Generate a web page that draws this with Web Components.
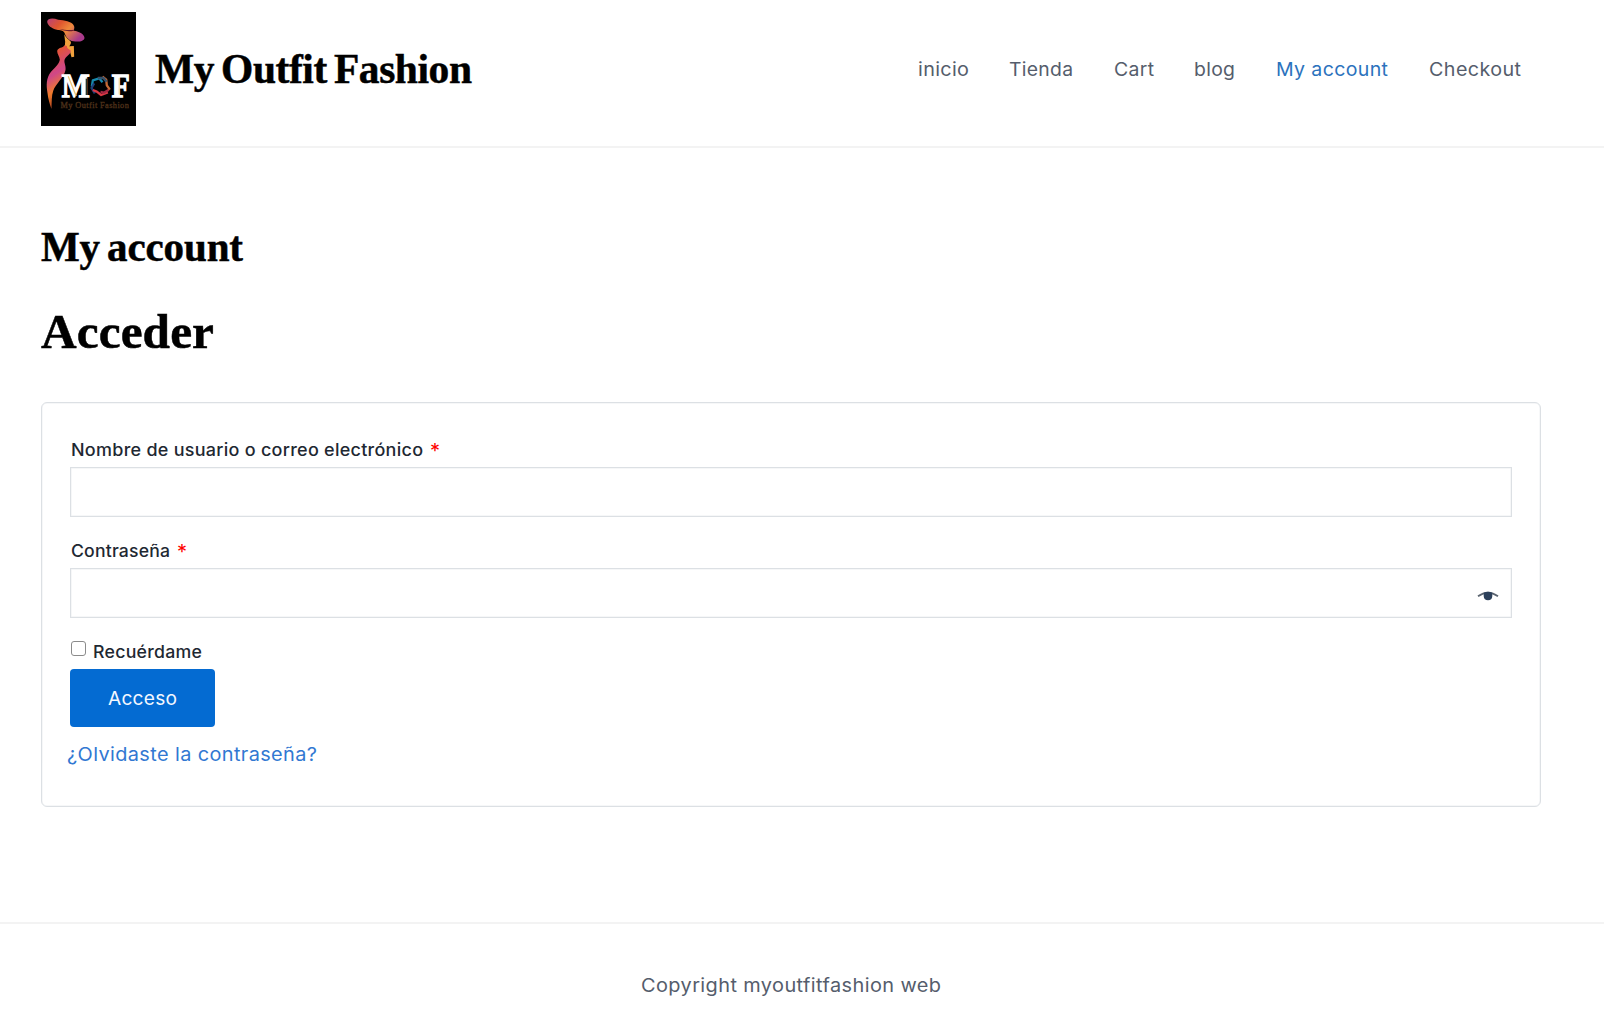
<!DOCTYPE html>
<html lang="es">
<head>
<meta charset="utf-8">
<title>My account – My Outfit Fashion</title>
<style>
html,body{margin:0;background:#fff}
body{width:1604px;height:1012px;overflow:hidden;font-family:Inter,"Open Sans",sans-serif;color:#4b4f58}
</style>
</head>
<body>
<account-page></account-page>
<script>
const define = (name, html, setup) => customElements.define(name, class extends HTMLElement {
  connectedCallback() {
    if (this.shadowRoot) return;
    this.attachShadow({ mode: 'open' }).innerHTML = html;
    if (setup) setup.call(this, this.shadowRoot);
  }
});

/* Text run widened and tracked so that it fills a given measure */
define('tracked-text', `<style>:host{display:block;white-space:nowrap;flex:none}span{display:inline-block;transform-origin:0 50%}</style><span><slot></slot></span>`, function (root) {
  const span = root.querySelector('span');
  const width = +this.getAttribute('width');
  this.style.width = width + 'px';
  const fit = () => {
    span.style.letterSpacing = '0px';
    span.style.transform = 'none';
    const n = this.textContent.length;
    const natural = span.getBoundingClientRect().width;
    const scale = 1 + (width / natural - 1) * .65;
    span.style.letterSpacing = (width / scale - natural) / (n - 1) + 'px';
    span.style.transform = `scaleX(${scale})`;
  };
  fit();
  document.fonts.ready.then(fit);
});

define('brand-logo', `<style>:host{display:block;width:95px;height:114px;flex:none}svg{display:block}</style>
<svg width="95" height="114" viewBox="34.5 37 285 342" aria-label="My Outfit Fashion">
<defs>
<linearGradient id="hat" x1="0" x2="1" y1="0" y2=".6"><stop offset="0" stop-color="#b8407c"/><stop offset=".35" stop-color="#e0562f"/><stop offset=".62" stop-color="#ee8a3c"/><stop offset="1" stop-color="#a93a8c"/></linearGradient>
<linearGradient id="dress" x1="0" x2=".25" y1="0" y2="1"><stop offset="0" stop-color="#f59a35"/><stop offset=".2" stop-color="#e3533d"/><stop offset=".5" stop-color="#cf4788"/><stop offset=".75" stop-color="#f07c2c"/><stop offset="1" stop-color="#a83c1c"/></linearGradient>
</defs>
<rect x="34.500" y="37" width="285" height="342" fill="#000"/>
<path fill="url(#hat)" d="M53 66C54 55 71 55 86 60C104 62 126 65 132 76C137 84 133 88 133 93C150 95 165 104 165 115C163 126 147 127 132 125C117 122 109 112 105 99C101 91 91 92 82 90C66 86 54 77 53 66Z"/>
<path fill="#6b1c2c" d="M89 88C103 90 119 93 135 90L133 93C119 96 105 94 100 91Z"/>
<path fill="#f0a13d" d="M104 104C110 115 119 121 124 126C126 131 121 137 119 140L133 139L134 171L126 173L121 154L105 151L107 126Z"/>
<path fill="url(#dress)" d="M105 137C100 146 86 143 83 154C83 164 90 170 91 180C89 193 75 204 64 217C50 235 50 256 54 280C56 298 61 315 66 328C67 306 66 288 71 274C78 252 104 234 108 211C110 198 103 190 105 181C108 170 123 165 124 154C122 148 113 150 112 139Z"/>
<g font-family="'Liberation Serif',serif" font-weight="bold" fill="#fff" stroke="#fff" stroke-width="4">
<text x="97" y="291" font-size="99" textLength="84" lengthAdjust="spacingAndGlyphs">M</text>
<text x="247" y="291" font-size="99" textLength="54" lengthAdjust="spacingAndGlyphs">F</text>
</g>
<path d="M116 230L140 289" stroke="#eec779" stroke-width="4"/>
<path d="M171 237V286" stroke="#26352b" stroke-width="5"/>
<path d="M269 235V284" stroke="#efd29a" stroke-width="3"/>
<g fill="none" stroke-width="7" stroke-linejoin="round">
<path stroke="#168aae" d="M187 260L190 242L209 236L219 248"/>
<path stroke="#1e3e78" d="M194 251L186 265L196 281"/>
<path stroke="#d93945" d="M190 271L202 276L215 286L235 278"/>
<path stroke="#a32642" d="M238 270L223 279L213 277"/>
<path stroke="#c66934" d="M219 231L230 240L232 257L241 270"/>
<path stroke="#37526b" d="M205 235L222 235L231 246"/>
</g>
<text x="93" y="326" font-family="'Liberation Serif',serif" font-size="25" fill="#4d3019" stroke="#4d3019" stroke-width="1" textLength="205">My Outfit Fashion</text>
</svg>`);

define('site-nav', `<style>:host{display:flex;font-size:18.500px;line-height:28px;color:#555d6c}
nav{display:flex;gap:40.600px}.on{color:#2b72bd}</style>
<nav><tracked-text width="51">inicio</tracked-text><tracked-text width="64">Tienda</tracked-text><tracked-text width="40">Cart</tracked-text><tracked-text width="41">blog</tracked-text><tracked-text class="on" width="112">My account</tracked-text><tracked-text width="92">Checkout</tracked-text></nav>`);

define('site-header', `<style>:host{display:flex;align-items:center;box-sizing:border-box;height:148px;padding:0 83.500px 8px 41px;border-bottom:2px solid #f3f3f3}
.title{margin-left:19px;font:bold 43px/60px "Liberation Serif",serif;color:#000;word-spacing:-3px;-webkit-text-stroke:.5px #000}site-nav{margin-left:auto}</style>
<brand-logo></brand-logo><tracked-text class="title" width="317">My Outfit Fashion</tracked-text><site-nav></site-nav>`);

define('form-field', `<style>:host{display:block}
.label{display:flex;gap:7px;box-sizing:border-box;height:28px;font-size:17px;line-height:28px;font-weight:500;color:#1e2832;padding:1px 0 0 1px;margin-bottom:4px}
.req{color:#f00;font-size:20px;line-height:30px;font-weight:400}
.box{box-sizing:border-box;height:50px;border:1px solid #dce0e4;box-shadow:inset 0 0 0 .5px #eef0f2;display:flex;align-items:center;justify-content:flex-end;padding:6px 12px 0 0}
svg{display:block}</style>
<div class="label"></div><div class="box"></div>`, function (root) {
  root.querySelector('.label').innerHTML = `<tracked-text width="${this.getAttribute('measure')}">${this.getAttribute('label')}</tracked-text><span class="req">*</span>`;
  if (this.hasAttribute('secret')) root.querySelector('.box').innerHTML = `<svg width="22" height="12" viewBox="0 0 22 12"><path d="M1 6.300Q11-1.200 21 6.300" fill="none" stroke="#5b6470" stroke-width="1.700"/><path d="M6.700 2.700Q11 .8 15.300 2.700V6Q15 10.300 11 10.300T6.700 6Z" fill="#2c405b"/></svg>`;
});

define('remember-me', `<style>:host{display:flex;align-items:flex-start;height:28px;padding-left:1px;font-size:17px;line-height:30px;font-weight:500;color:#1e2832}
i{box-sizing:border-box;width:15px;height:15px;margin:4px 7px 0 0;border:1.500px solid #8b8b8b;border-radius:3px}</style>
<i></i><tracked-text width="109">Recuérdame</tracked-text>`);

define('submit-button', `<style>:host{display:flex;align-items:center;justify-content:center;width:145px;height:58px;border-radius:4px;background:#046bd2;color:#f4f8ff;font-size:18.500px;line-height:28px}</style>
<tracked-text width="69">Acceso</tracked-text>`);

define('login-form', `<style>:host{display:block;box-sizing:border-box;width:1500px;height:405px;border:1px solid #dce0e4;box-shadow:inset 0 0 0 .5px #eef0f2;border-radius:6px;padding:32px 28.500px 0 28px}
form-field{margin-bottom:19px}submit-button{margin-top:4px}
.lost{font-size:18.500px;line-height:28px;color:#3178d2;margin:13px 0 0 -3px}</style>
<form-field label="Nombre de usuario o correo electrónico" measure="352"></form-field>
<form-field label="Contraseña" measure="99" secret></form-field>
<remember-me></remember-me><submit-button></submit-button>
<tracked-text class="lost" width="250">¿Olvidaste la contraseña?</tracked-text>`);

define('site-footer', `<style>:host{display:flex;justify-content:center;box-sizing:border-box;height:90px;padding:47px 22px 0 0;border-top:2px solid #f3f3f3;font-size:18.500px;line-height:28px;color:#555d6c}</style>
<tracked-text width="300">Copyright myoutfitfashion web</tracked-text>`);

define('account-page', `<style>:host{display:flex;flex-direction:column;height:1012px}
main{flex:1;padding:73px 0 0 41px}
h1,h2{margin:0;color:#000;font-family:"Liberation Serif",serif;font-weight:bold;-webkit-text-stroke:.5px #000}
h1{font-size:41.500px;line-height:52px;word-spacing:-3px}h2{font-size:49px;line-height:60px;margin:29px 0 40px}</style>
<site-header></site-header>
<main><h1><tracked-text width="202">My account</tracked-text></h1><h2><tracked-text width="173">Acceder</tracked-text></h2><login-form></login-form></main>
<site-footer></site-footer>`);
</script>
</body>
</html>
